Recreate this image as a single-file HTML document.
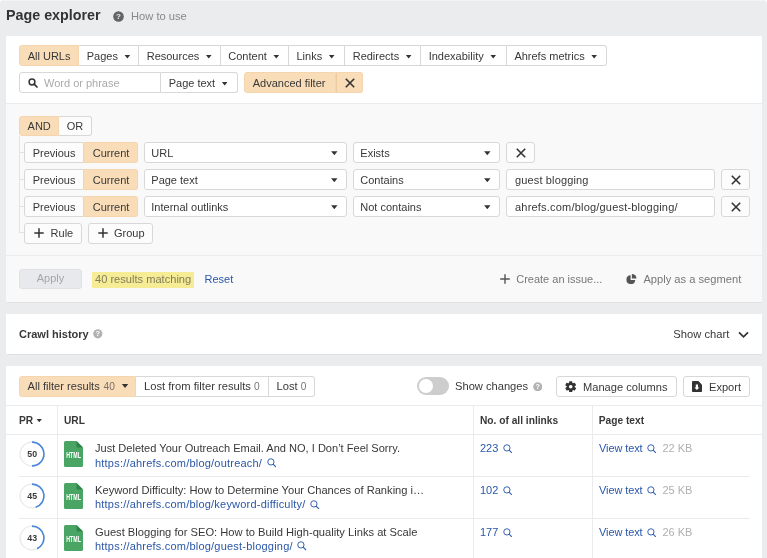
<!DOCTYPE html>
<html lang="en">
<head>
<meta charset="utf-8">
<title>Page explorer</title>
<style>
*{box-sizing:border-box;margin:0;padding:0}
html,body{width:767px;height:558px;overflow:hidden;background:#fff}
body{position:relative;font-family:"Liberation Sans",sans-serif;font-size:11px;color:#383838;line-height:1}
.abs,.panel,.btn,.t,.ln{position:absolute}
.panel{background:#fff;left:6px;width:756px;box-shadow:0 0.5px 1px rgba(0,0,0,.05)}
.btn{height:21px;border:1px solid #d8d8d8;background:#fff;border-left-width:0;line-height:20.3px;padding-left:7.7px;white-space:nowrap;color:#383838}
.btn.first{border-left-width:1px;border-radius:3px 0 0 3px}
.btn.last{border-radius:0 3px 3px 0}
.btn.solo{border-left-width:1px;border-radius:3px}
.btn.on{background:#f9ddb9;border-color:#f4d5ae}
.btn.gray{background:#fcfcfc}
.car{display:inline-block;width:6.4px;height:4px;background:#333;clip-path:polygon(0 0,100% 0,50% 100%);margin-left:6.3px;vertical-align:1.5px}
.t{white-space:nowrap;line-height:12px}
.ln{background:#e6e6e6}
.lnk{color:#2a57a8}
.gr{color:#999}
.b{font-weight:bold}
.mg{display:inline-block;vertical-align:-1px;margin-left:1.3px}
.h{font-size:10.2px;font-weight:bold}
.x{position:absolute;left:50%;top:50%;width:12px;height:12px;margin:-6px 0 0 -6px}
</style>
</head>
<body><div id="root" style="position:absolute;left:0;top:0;width:767px;height:558px;will-change:transform;filter:blur(0.35px);background:#ebecee;border-radius:4px 4px 0 0;overflow:hidden">

<div class="abs" style="left:0;top:0;width:767px;height:1px;background:#f3f3f4"></div>
<!-- Title -->
<div class="t b" style="left:6px;top:5.9px;font-size:14.3px;line-height:18px;color:#333">Page explorer</div>
<svg class="abs" style="left:113px;top:11px" width="11" height="11" viewBox="0 0 11 11"><circle cx="5.5" cy="5.5" r="5.3" fill="#636363"/><text x="5.5" y="8.3" font-family="Liberation Sans, sans-serif" font-size="8" font-weight="bold" fill="#ebecee" text-anchor="middle">?</text></svg>
<div class="t" style="left:131px;top:10px;font-size:11.15px;color:#888">How to use</div>

<!-- Top panel -->
<div class="panel" style="top:36px;height:67px"></div>
<div class="btn first on" style="left:19px;top:45px;width:60px">All URLs</div>
<div class="btn" style="left:79px;top:45px;width:60px">Pages<span class="car"></span></div>
<div class="btn" style="left:139px;top:45px;width:81.6px">Resources<span class="car"></span></div>
<div class="btn" style="left:220.6px;top:45px;width:68.2px">Content<span class="car"></span></div>
<div class="btn" style="left:288.8px;top:45px;width:56.2px">Links<span class="car"></span></div>
<div class="btn" style="left:345px;top:45px;width:76px">Redirects<span class="car"></span></div>
<div class="btn" style="left:421px;top:45px;width:85.7px">Indexability<span class="car"></span></div>
<div class="btn last" style="left:506.7px;top:45px;width:100.3px">Ahrefs metrics<span class="car"></span></div>

<div class="btn first" style="left:19px;top:72px;width:142px;padding-left:24px;line-height:20.7px;color:#aaa">Word or phrase</div>
<svg class="abs" style="left:27.7px;top:77.5px" width="10" height="10" viewBox="0 0 10 10"><circle cx="4" cy="4" r="2.9" fill="none" stroke="#333" stroke-width="1.5"/><path d="M6.2 6.2L9 9" stroke="#333" stroke-width="1.7" stroke-linecap="round"/></svg>
<div class="btn last" style="left:161px;top:72px;width:77px;line-height:20.7px">Page text<span class="car"></span></div>
<div class="btn first on" style="left:244px;top:72.4px;width:92px;height:20.6px;line-height:20.3px">Advanced filter</div>
<div class="btn last on" style="left:336px;top:72.4px;width:27.2px;height:20.6px;padding:0;border-left:1px solid #efcca0"><svg class="x" viewBox="0 0 12 12"><path d="M1.8 1.8L10.2 10.2M10.2 1.8L1.8 10.2" stroke="#333" stroke-width="1.6"/></svg></div>

<!-- Filter panel -->
<div class="panel" style="top:102.5px;height:199.5px;background:#f9f9f9;border-top:1px solid #ececec"></div>
<div class="btn first on" style="left:19px;top:115.6px;width:40px;height:20.6px;line-height:19.9px;padding-left:7.6px">AND</div>
<div class="btn last gray" style="left:59px;top:115.6px;width:33px;height:20.6px;line-height:19.9px">OR</div>
<div class="ln" style="left:18.7px;top:136px;width:1px;height:97.2px;background:#e3e3e3"></div>

<!-- rule rows -->
<div class="ln" style="left:19px;top:152px;width:5px;height:1px;background:#e3e3e3"></div>
<div class="btn first gray" style="left:24px;top:142px;width:60px">Previous</div>
<div class="btn last on" style="left:84px;top:142px;width:54px;padding-left:8.7px">Current</div>
<div class="btn solo" style="left:144px;top:142px;width:203px;padding-left:6.3px">URL<span class="car abs" style="right:8.5px;top:8.3px"></span></div>
<div class="btn solo" style="left:353px;top:142px;width:147px;padding-left:6.3px">Exists<span class="car abs" style="right:8.5px;top:8.3px"></span></div>
<div class="btn solo gray" style="left:506px;top:142px;width:29px;padding:0"><svg class="x" viewBox="0 0 12 12"><path d="M1.8 1.8L10.2 10.2M10.2 1.8L1.8 10.2" stroke="#333" stroke-width="1.6"/></svg></div>

<div class="ln" style="left:19px;top:179px;width:5px;height:1px;background:#e3e3e3"></div>
<div class="btn first gray" style="left:24px;top:169px;width:60px">Previous</div>
<div class="btn last on" style="left:84px;top:169px;width:54px;padding-left:8.7px">Current</div>
<div class="btn solo" style="left:144px;top:169px;width:203px;padding-left:6.3px">Page text<span class="car abs" style="right:8.5px;top:8.3px"></span></div>
<div class="btn solo" style="left:353px;top:169px;width:147px;padding-left:6.3px">Contains<span class="car abs" style="right:8.5px;top:8.3px"></span></div>
<div class="btn solo" style="left:506px;top:169px;width:209px;padding-left:8px;letter-spacing:0.14px">guest blogging</div>
<div class="btn solo gray" style="left:721px;top:169px;width:29px;padding:0"><svg class="x" viewBox="0 0 12 12"><path d="M1.8 1.8L10.2 10.2M10.2 1.8L1.8 10.2" stroke="#333" stroke-width="1.6"/></svg></div>

<div class="ln" style="left:19px;top:206px;width:5px;height:1px;background:#e3e3e3"></div>
<div class="btn first gray" style="left:24px;top:196px;width:60px">Previous</div>
<div class="btn last on" style="left:84px;top:196px;width:54px;padding-left:8.7px">Current</div>
<div class="btn solo" style="left:144px;top:196px;width:203px;padding-left:6.3px">Internal outlinks<span class="car abs" style="right:8.5px;top:8.3px"></span></div>
<div class="btn solo" style="left:353px;top:196px;width:147px;padding-left:6.3px">Not contains<span class="car abs" style="right:8.5px;top:8.3px"></span></div>
<div class="btn solo" style="left:506px;top:196px;width:209px;padding-left:8px;letter-spacing:0.2px">ahrefs.com/blog/guest-blogging/</div>
<div class="btn solo gray" style="left:721px;top:196px;width:29px;padding:0"><svg class="x" viewBox="0 0 12 12"><path d="M1.8 1.8L10.2 10.2M10.2 1.8L1.8 10.2" stroke="#333" stroke-width="1.6"/></svg></div>

<div class="ln" style="left:19px;top:232.4px;width:5px;height:1px;background:#e3e3e3"></div>
<div class="btn solo gray" style="left:24px;top:223px;width:57.5px;height:20.5px;line-height:18.2px;padding-left:25.6px">Rule<svg class="abs" style="left:8.7px;top:4.2px" width="10" height="10" viewBox="0 0 10 10"><path d="M5 0.3V9.7M0.3 5H9.7" stroke="#333" stroke-width="1.5"/></svg></div>
<div class="btn solo gray" style="left:88px;top:223px;width:65px;height:20.5px;line-height:18.2px;padding-left:25px">Group<svg class="abs" style="left:8.7px;top:4.2px" width="10" height="10" viewBox="0 0 10 10"><path d="M5 0.3V9.7M0.3 5H9.7" stroke="#333" stroke-width="1.5"/></svg></div>

<div class="ln" style="left:6px;top:255px;width:756px;height:1px;background:#ececec"></div>

<div class="btn solo" style="left:19px;top:269px;width:63px;height:19.7px;line-height:17.9px;background:#e8e9ed;border-color:#e0e1e5;color:#a6a6aa;text-align:center;padding:0">Apply</div>
<div class="abs" style="left:92.2px;top:271.8px;width:101.5px;height:16.2px;background:#f5ec95;border-radius:1px"></div>
<div class="t" style="left:95px;top:273px;font-size:11.1px;color:#827d5a">40 results matching</div>
<div class="t lnk" style="left:204.5px;top:273px">Reset</div>

<svg class="abs" style="left:499.7px;top:274px" width="10" height="10" viewBox="0 0 10 10"><path d="M5 0.2V9.8M0.2 5H9.8" stroke="#555" stroke-width="1.4"/></svg>
<div class="t" style="left:516.2px;top:273px;color:#787878">Create an issue...</div>
<svg class="abs" style="left:626.2px;top:273.5px" width="10.5" height="10.5" viewBox="0 0 10 10"><path d="M4.4 1.2A4.2 4.2 0 1 0 8.8 5.6H4.4Z" fill="#555"/><path d="M5.6 0A4.4 4.4 0 0 1 10 4.4H5.6Z" fill="#555"/></svg>
<div class="t" style="left:643.4px;top:273px;font-size:11.15px;color:#787878">Apply as a segment</div>

<!-- Crawl history -->
<div class="panel" style="top:314px;height:40px"></div>
<div class="t b" style="left:19px;top:328px">Crawl history</div>
<svg class="abs" style="left:93px;top:329.4px" width="9.6" height="9.6" viewBox="0 0 9 9"><circle cx="4.5" cy="4.5" r="4.3" fill="#b2b2b2"/><text x="4.5" y="7" font-family="Liberation Sans, sans-serif" font-size="7" font-weight="bold" fill="#fff" text-anchor="middle">?</text></svg>
<div class="t" style="left:673.3px;top:328px;font-size:11.2px">Show chart</div>
<svg class="abs" style="left:738px;top:330.6px" width="11" height="8" viewBox="0 0 11 8"><path d="M1 1.3L5.5 5.8L10 1.3" fill="none" stroke="#333" stroke-width="1.7"/></svg>

<!-- Table panel -->
<div class="panel" style="top:365.5px;height:193px"></div>
<div class="btn first on" style="left:19px;top:375.5px;width:117px;padding-left:7.6px;font-size:11.1px;line-height:18.8px">All filter results <span style="color:#7a7068;font-size:10.2px;margin-left:0.7px">40</span><span class="car" style="margin-left:7px"></span></div>
<div class="btn" style="left:136px;top:375.5px;width:132.5px;padding-left:8px;font-size:11.2px;line-height:18.8px">Lost from filter results <span style="color:#777;font-size:10.2px">0</span></div>
<div class="btn last" style="left:268.5px;top:375.5px;width:46.5px;padding-left:8px;font-size:11.2px;line-height:18.8px">Lost <span style="color:#777;font-size:10.2px">0</span></div>

<div class="abs" style="left:417px;top:377.4px;width:32px;height:17.6px;border-radius:9px;background:#cdcdcd"></div>
<div class="abs" style="left:418.8px;top:379.2px;width:14px;height:14px;border-radius:7px;background:#fff"></div>
<div class="t" style="left:455px;top:380px;font-size:11.15px">Show changes</div>
<svg class="abs" style="left:532.6px;top:381.8px" width="9.5" height="9.5" viewBox="0 0 9 9"><circle cx="4.5" cy="4.5" r="4.3" fill="#b2b2b2"/><text x="4.5" y="7" font-family="Liberation Sans, sans-serif" font-size="7" font-weight="bold" fill="#fff" text-anchor="middle">?</text></svg>

<div class="btn solo" style="left:556px;top:375.5px;width:120.5px;padding-left:26px;font-size:11.1px">Manage columns</div>
<svg class="abs" style="left:564.6px;top:380.5px" width="11.4" height="11.4" viewBox="0 0 12 12"><g fill="#333"><circle cx="6" cy="6" r="4.2"/><rect x="4.3" y="0.2" width="3.4" height="11.6" rx="0.6"/><rect x="4.3" y="0.2" width="3.4" height="11.6" rx="0.6" transform="rotate(60 6 6)"/><rect x="4.3" y="0.2" width="3.4" height="11.6" rx="0.6" transform="rotate(120 6 6)"/></g><circle cx="6" cy="6" r="1.9" fill="#fff"/></svg>
<div class="btn solo" style="left:683px;top:375.5px;width:67px;padding-left:25px;font-size:11.1px">Export</div>
<svg class="abs" style="left:691.9px;top:380.6px" width="10" height="11.2" viewBox="0 0 10 11"><path d="M1 0H6.4L10 3.6V10Q10 11 9 11H1Q0 11 0 10V1Q0 0 1 0Z" fill="#333"/><path d="M3.8 3.3H6V6.5H7.4L4.9 8.9L2.4 6.5H3.8Z" fill="#fff"/></svg>

<div class="ln" style="left:6px;top:405px;width:756px;height:1px;background:#ebebeb"></div>
<div class="ln" style="left:6px;top:434px;width:756px;height:1px;background:#ebebeb"></div>
<div class="ln" style="left:57px;top:406px;width:1px;height:152px;background:#ebebeb"></div>
<div class="ln" style="left:473px;top:406px;width:1px;height:152px;background:#ebebeb"></div>
<div class="ln" style="left:592px;top:406px;width:1px;height:152px;background:#ebebeb"></div>
<div class="ln" style="left:19px;top:476px;width:731.2px;height:1px;background:#ebebeb"></div>
<div class="ln" style="left:19px;top:518px;width:731.2px;height:1px;background:#ebebeb"></div>

<div class="t h" style="left:19px;top:414.5px">PR<span class="car" style="margin-left:3.3px;width:5.6px;height:3.4px;vertical-align:1.3px"></span></div>
<div class="t h" style="left:64px;top:414.5px">URL</div>
<div class="t h" style="left:480px;top:414.5px">No. of all inlinks</div>
<div class="t h" style="left:598.8px;top:414.5px">Page text</div>

<!-- row 1 -->
<svg class="abs" style="left:18.8px;top:441.2px" width="26" height="26" viewBox="0 0 26 26"><circle cx="13" cy="13" r="11.9" fill="none" stroke="#e9e9e9" stroke-width="1.3"/><path d="M13 1.1A11.9 11.9 0 0 1 13.00 24.90" fill="none" stroke="#4a86d8" stroke-width="1.6"/><text x="13.2" y="15.8" font-family="Liberation Sans, sans-serif" font-size="8.8" font-weight="bold" fill="#3a3a3a" text-anchor="middle">50</text></svg>
<svg class="abs" style="left:64px;top:441px" width="19" height="26" viewBox="0 0 19 26"><path d="M1.5 0H12.5L19 6.5V24.5Q19 26 17.5 26H1.5Q0 26 0 24.5V1.5Q0 0 1.5 0Z" fill="#4aa564"/><path d="M12.5 0L19 6.5H13.5Q12.5 6.5 12.5 5.5Z" fill="#2f8449"/><text x="2.3" y="17.4" font-family="Liberation Sans, sans-serif" font-size="8.2" font-weight="bold" fill="#fff" textLength="14.6" lengthAdjust="spacingAndGlyphs">HTML</text></svg>
<div class="t" style="left:95px;top:442.3px;font-size:11.06px">Just Deleted Your Outreach Email. And NO, I Don’t Feel Sorry.</div>
<div class="t lnk" style="left:95px;top:456.7px;letter-spacing:0.21px">https://ahrefs.com/blog/outreach/ <svg class="mg" width="9.4" height="9.4" viewBox="0 0 9.4 9.4"><circle cx="3.9" cy="3.9" r="3.15" fill="none" stroke="#3460b0" stroke-width="1"/><path d="M6.1 6.1L9 9" stroke="#3460b0" stroke-width="1.15"/></svg></div>
<div class="t lnk" style="left:480px;top:442.4px">223 <svg class="mg" width="9.4" height="9.4" viewBox="0 0 9.4 9.4"><circle cx="3.9" cy="3.9" r="3.15" fill="none" stroke="#3460b0" stroke-width="1"/><path d="M6.1 6.1L9 9" stroke="#3460b0" stroke-width="1.15"/></svg></div>
<div class="t lnk" style="left:599px;top:442.4px;letter-spacing:-0.1px">View text <svg class="mg" width="9.4" height="9.4" viewBox="0 0 9.4 9.4"><circle cx="3.9" cy="3.9" r="3.15" fill="none" stroke="#3460b0" stroke-width="1"/><path d="M6.1 6.1L9 9" stroke="#3460b0" stroke-width="1.15"/></svg><span style="color:#b0b0b0;margin-left:6.3px;letter-spacing:0">22 KB</span></div>

<!-- row 2 -->
<svg class="abs" style="left:18.8px;top:483.2px" width="26" height="26" viewBox="0 0 26 26"><circle cx="13" cy="13" r="11.9" fill="none" stroke="#e9e9e9" stroke-width="1.3"/><path d="M13 1.1A11.9 11.9 0 0 1 16.68 24.32" fill="none" stroke="#4a86d8" stroke-width="1.6"/><text x="13.2" y="15.8" font-family="Liberation Sans, sans-serif" font-size="8.8" font-weight="bold" fill="#3a3a3a" text-anchor="middle">45</text></svg>
<svg class="abs" style="left:64px;top:483px" width="19" height="26" viewBox="0 0 19 26"><path d="M1.5 0H12.5L19 6.5V24.5Q19 26 17.5 26H1.5Q0 26 0 24.5V1.5Q0 0 1.5 0Z" fill="#4aa564"/><path d="M12.5 0L19 6.5H13.5Q12.5 6.5 12.5 5.5Z" fill="#2f8449"/><text x="2.3" y="17.4" font-family="Liberation Sans, sans-serif" font-size="8.2" font-weight="bold" fill="#fff" textLength="14.6" lengthAdjust="spacingAndGlyphs">HTML</text></svg>
<div class="t" style="left:95px;top:484.1px;font-size:11.15px">Keyword Difficulty: How to Determine Your Chances of Ranking i…</div>
<div class="t lnk" style="left:95px;top:498.3px;letter-spacing:0.21px">https://ahrefs.com/blog/keyword-difficulty/ <svg class="mg" width="9.4" height="9.4" viewBox="0 0 9.4 9.4"><circle cx="3.9" cy="3.9" r="3.15" fill="none" stroke="#3460b0" stroke-width="1"/><path d="M6.1 6.1L9 9" stroke="#3460b0" stroke-width="1.15"/></svg></div>
<div class="t lnk" style="left:480px;top:484.2px">102 <svg class="mg" width="9.4" height="9.4" viewBox="0 0 9.4 9.4"><circle cx="3.9" cy="3.9" r="3.15" fill="none" stroke="#3460b0" stroke-width="1"/><path d="M6.1 6.1L9 9" stroke="#3460b0" stroke-width="1.15"/></svg></div>
<div class="t lnk" style="left:599px;top:484.2px;letter-spacing:-0.1px">View text <svg class="mg" width="9.4" height="9.4" viewBox="0 0 9.4 9.4"><circle cx="3.9" cy="3.9" r="3.15" fill="none" stroke="#3460b0" stroke-width="1"/><path d="M6.1 6.1L9 9" stroke="#3460b0" stroke-width="1.15"/></svg><span style="color:#b0b0b0;margin-left:6.3px;letter-spacing:0">25 KB</span></div>

<!-- row 3 -->
<svg class="abs" style="left:18.8px;top:525.2px" width="26" height="26" viewBox="0 0 26 26"><circle cx="13" cy="13" r="11.9" fill="none" stroke="#e9e9e9" stroke-width="1.3"/><path d="M13 1.1A11.9 11.9 0 0 1 18.07 23.77" fill="none" stroke="#4a86d8" stroke-width="1.6"/><text x="13.2" y="15.8" font-family="Liberation Sans, sans-serif" font-size="8.8" font-weight="bold" fill="#3a3a3a" text-anchor="middle">43</text></svg>
<svg class="abs" style="left:64px;top:525px" width="19" height="26" viewBox="0 0 19 26"><path d="M1.5 0H12.5L19 6.5V24.5Q19 26 17.5 26H1.5Q0 26 0 24.5V1.5Q0 0 1.5 0Z" fill="#4aa564"/><path d="M12.5 0L19 6.5H13.5Q12.5 6.5 12.5 5.5Z" fill="#2f8449"/><text x="2.3" y="17.4" font-family="Liberation Sans, sans-serif" font-size="8.2" font-weight="bold" fill="#fff" textLength="14.6" lengthAdjust="spacingAndGlyphs">HTML</text></svg>
<div class="t" style="left:95px;top:525.7px;font-size:11.17px">Guest Blogging for SEO: How to Build High-quality Links at Scale</div>
<div class="t lnk" style="left:95px;top:539.8px;letter-spacing:0.21px">https://ahrefs.com/blog/guest-blogging/ <svg class="mg" width="9.4" height="9.4" viewBox="0 0 9.4 9.4"><circle cx="3.9" cy="3.9" r="3.15" fill="none" stroke="#3460b0" stroke-width="1"/><path d="M6.1 6.1L9 9" stroke="#3460b0" stroke-width="1.15"/></svg></div>
<div class="t lnk" style="left:480px;top:525.9px">177 <svg class="mg" width="9.4" height="9.4" viewBox="0 0 9.4 9.4"><circle cx="3.9" cy="3.9" r="3.15" fill="none" stroke="#3460b0" stroke-width="1"/><path d="M6.1 6.1L9 9" stroke="#3460b0" stroke-width="1.15"/></svg></div>
<div class="t lnk" style="left:599px;top:525.9px;letter-spacing:-0.1px">View text <svg class="mg" width="9.4" height="9.4" viewBox="0 0 9.4 9.4"><circle cx="3.9" cy="3.9" r="3.15" fill="none" stroke="#3460b0" stroke-width="1"/><path d="M6.1 6.1L9 9" stroke="#3460b0" stroke-width="1.15"/></svg><span style="color:#b0b0b0;margin-left:6.3px;letter-spacing:0">26 KB</span></div>

</div></body>
</html>
